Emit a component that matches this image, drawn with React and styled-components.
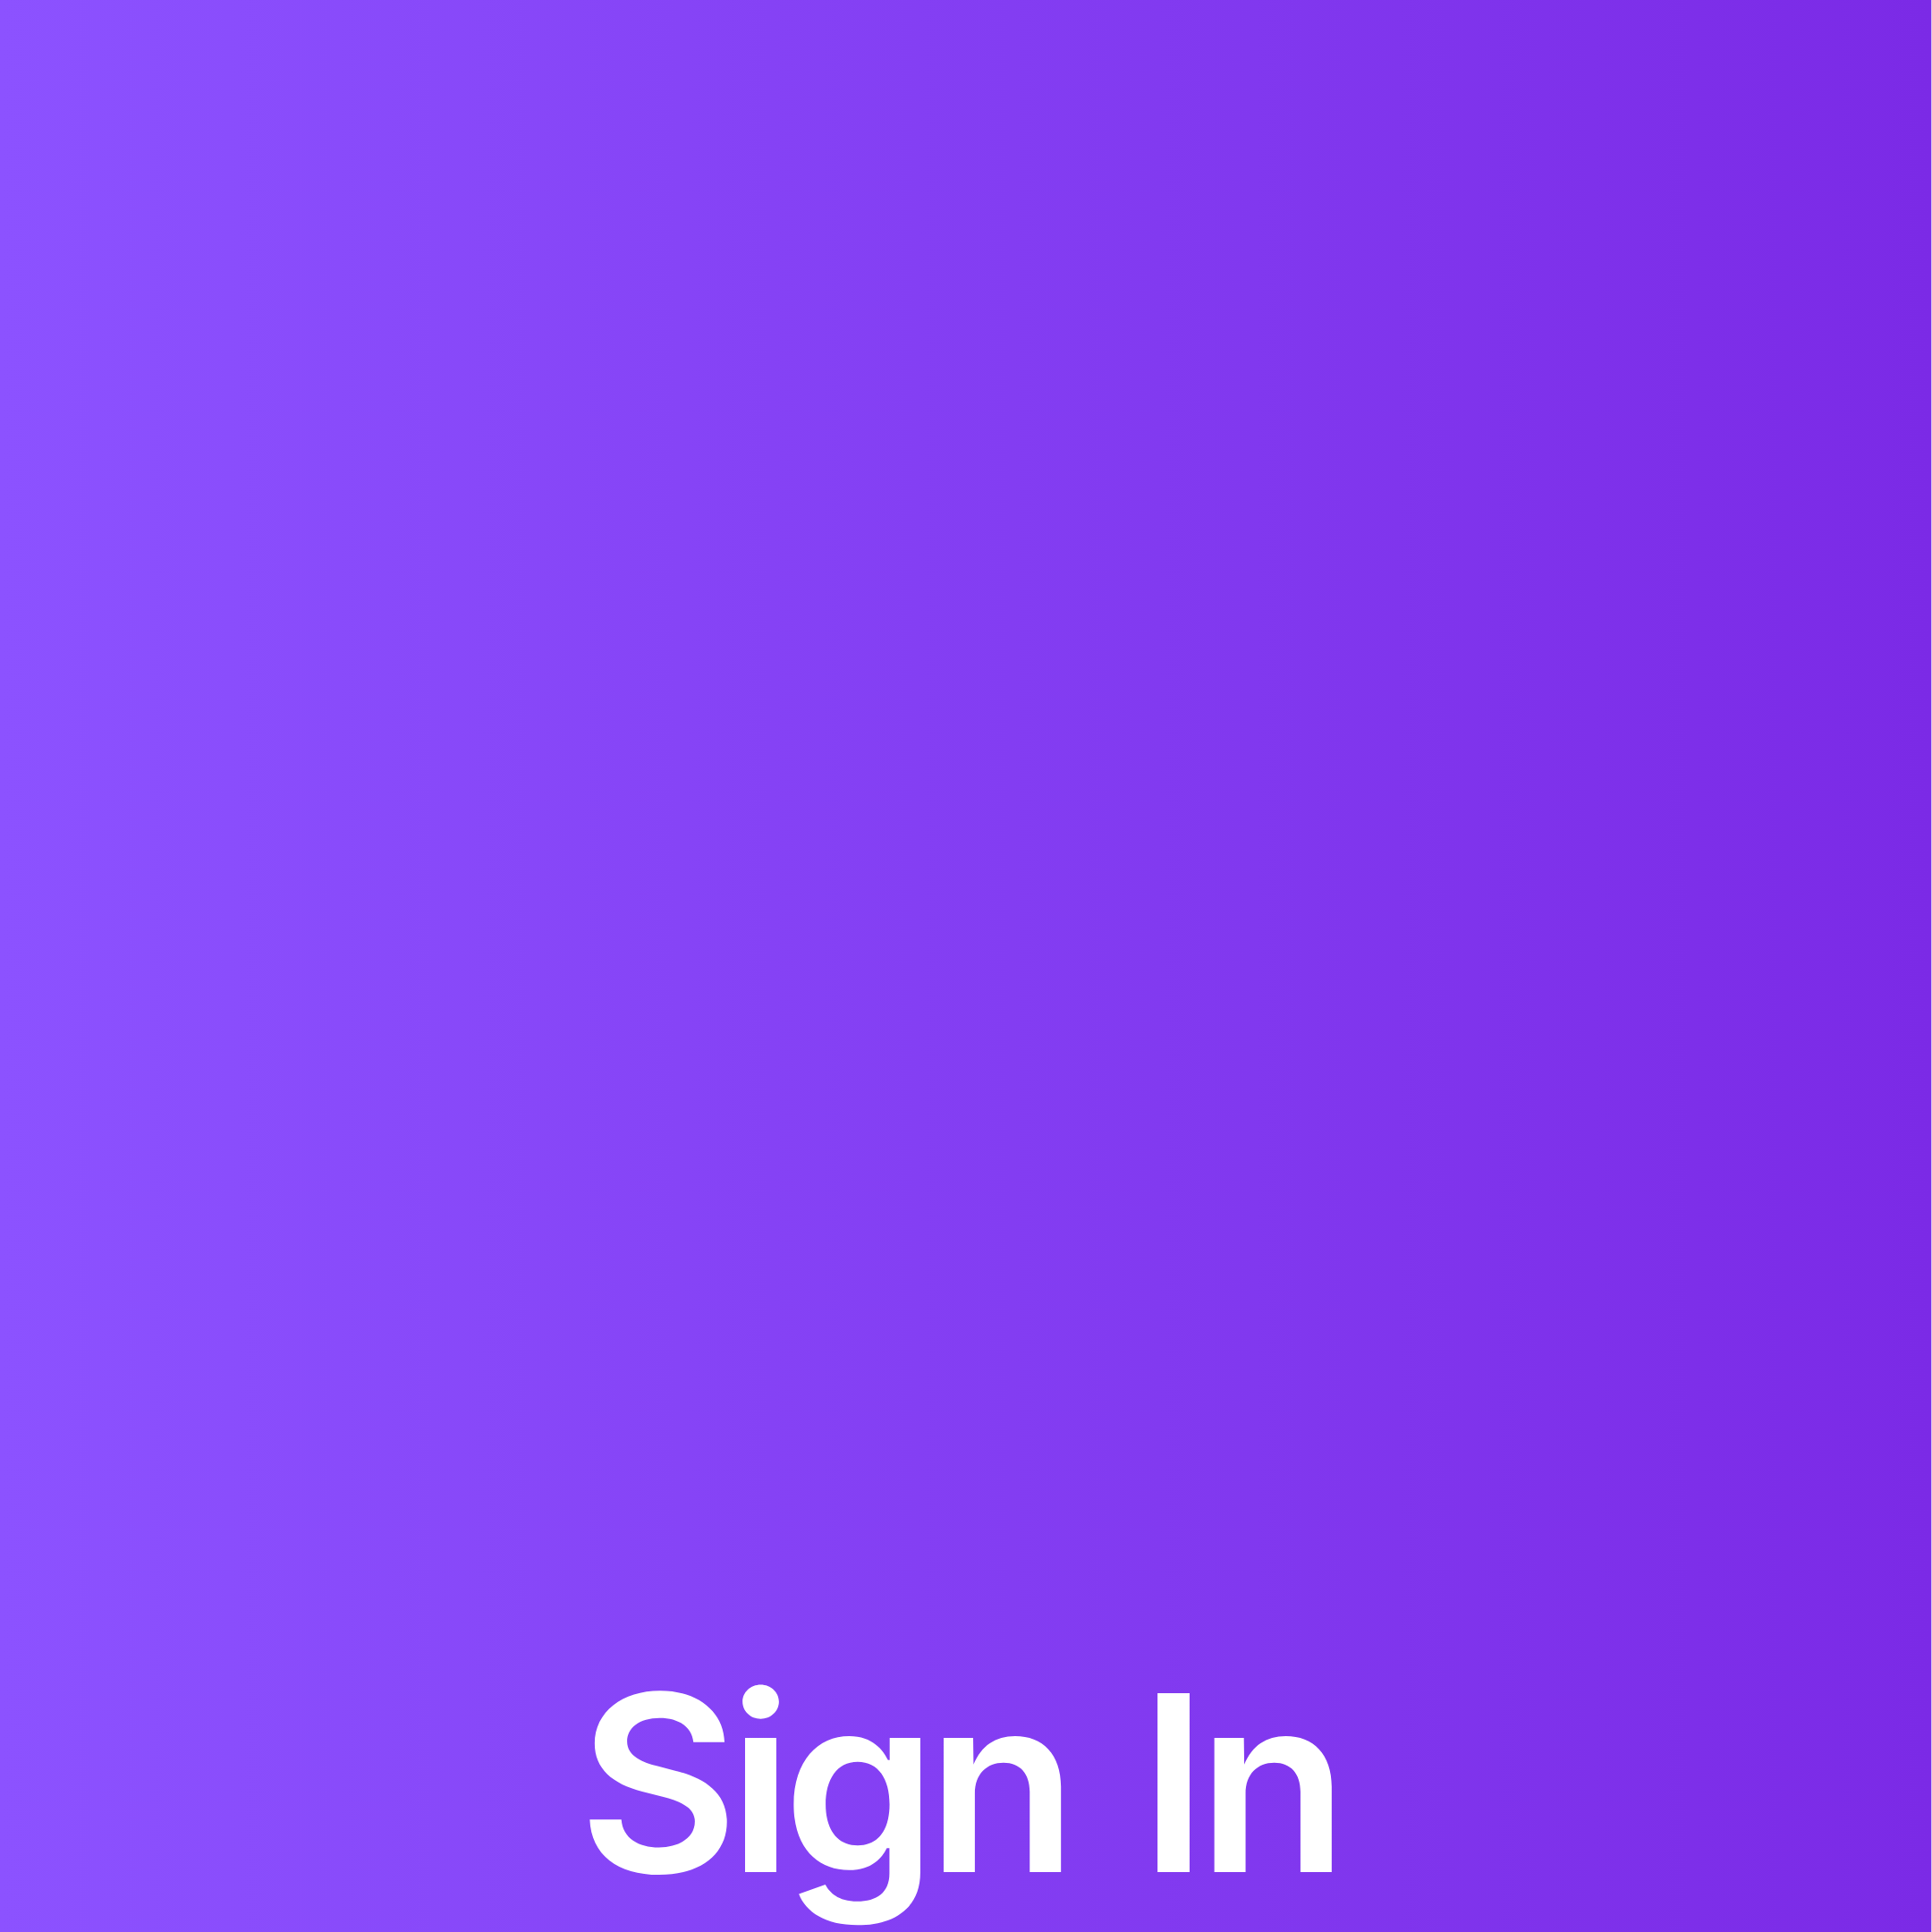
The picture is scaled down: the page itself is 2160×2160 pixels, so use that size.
import styled, { createGlobalStyle } from "styled-components";

const GlobalStyle = createGlobalStyle`
  html, body {
    margin: 0;
    padding: 0;
    background: #d4bff7;
  }
  #root {
    height: 2160px;
  }
`;

const Screen = styled.div`
  width: 2159px;
  height: 2160px;
  display: flex;
  flex-direction: column;
  justify-content: flex-end;
  align-items: center;
  padding-bottom: 29px;
  box-sizing: border-box;
  background: linear-gradient(90deg, #8c52ff 0%, #7b2ae6 100%);
  overflow: hidden;
`;

const Title = styled.h1`
  margin: 0;
  font-family: Inter, "Liberation Sans", sans-serif;
  font-weight: 620;
  font-size: 275px;
  line-height: 1;
  letter-spacing: -11px;
  word-spacing: 22px;
  color: #ffffff;
  white-space: pre;
  transform: translateX(-8px);
`;

export default function App() {
  return (
    <>
      <GlobalStyle />
      <Screen>
        <Title>Sign In</Title>
      </Screen>
    </>
  );
}
